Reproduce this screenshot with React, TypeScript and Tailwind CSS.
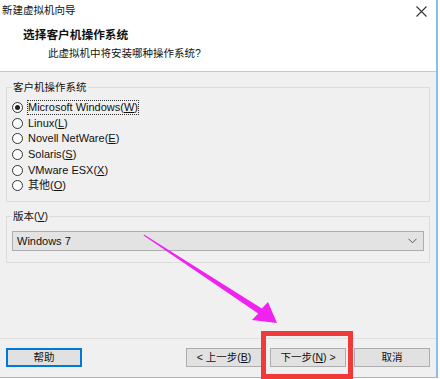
import { ReactNode } from "react";

const cjk = "font-['Liberation_Sans','Noto_Sans_CJK_SC',sans-serif]";

interface OsOption {
  label: string;
  key: string;
  checked?: boolean;
}

const osOptions: OsOption[] = [
  { label: "Microsoft Windows", key: "W", checked: true },
  { label: "Linux", key: "L" },
  { label: "Novell NetWare", key: "E" },
  { label: "Solaris", key: "S" },
  { label: "VMware ESX", key: "X" },
  { label: "其他", key: "O" },
];

const Hotkey = ({ k }: { k: string }) => (
  <>
    (<span className="underline underline-offset-[1px]">{k}</span>)
  </>
);

const Radio = ({ option }: { option: OsOption }) => (
  <div className="flex h-[15.6px] items-center">
    <div className="flex h-[11px] w-[11px] items-center justify-center rounded-full border border-[#333] bg-white">
      {option.checked && <div className="h-[5px] w-[5px] rounded-full bg-[#222]" />}
    </div>
    <span
      className={
        "ml-[4px] leading-[13px] " +
        (option.checked ? "border border-dotted border-[#333] px-[0px]" : "border border-transparent")
      }
    >
      {option.label}
      <Hotkey k={option.key} />
    </span>
  </div>
);

const Group = ({ title, className, children }: { title: ReactNode; className: string; children: ReactNode }) => (
  <div className={"ml-[6px] w-[424px] border border-[#dcdcdc] " + className}>
    <div className="-mt-[8px] ml-[5px] h-[14px] w-fit bg-[#f0f0f0] px-[1px] leading-[14px]">{title}</div>
    {children}
  </div>
);

const Button = ({ children, primary }: { children: ReactNode; primary?: boolean }) => (
  <button
    className={
      "flex h-[19px] w-[76px] items-center justify-center bg-[#e1e1e1] text-[10.5px] leading-none text-[#111] " +
      (primary
        ? "border border-[#0078d7] shadow-[inset_0_0_0_1px_#0078d7]"
        : "border border-[#adadad]")
    }
  >
    {children}
  </button>
);

export default function App() {
  return (
    <div className={"relative flex h-[379px] w-[440px] overflow-hidden bg-white text-[10.5px] text-[#111] " + cjk}>
      <div className="flex h-[378px] w-[438px] flex-col border-r-2 border-b border-[#8dbde6] bg-[#f0f0f0]">
        {/* header */}
        <div className="h-[72px] border-b border-[#c9c9c9] bg-white">
          <div className="flex items-center justify-between pl-[2px] pr-[9px] pt-[3px]">
            <span className="text-[10.5px] leading-[14px]">新建虚拟机向导</span>
            <svg width="11" height="11" viewBox="0 0 11 11" className="mt-[2px]">
              <path d="M0.5 0.5L10.5 10.5M10.5 0.5L0.5 10.5" stroke="#333" strokeWidth="1.1" />
            </svg>
          </div>
          <div className="ml-[23px] mt-[11px] text-[11.7px] font-bold leading-[14px]">选择客户机操作系统</div>
          <div className="ml-[48px] mt-[4px] leading-[14px]">此虚拟机中将安装哪种操作系统?</div>
        </div>

        {/* body */}
        <Group title="客户机操作系统" className="mt-[15px] h-[115px]">
          <div className="mt-[6px] pl-[5px] text-[11px]">
            {osOptions.map((o) => (
              <Radio key={o.key} option={o} />
            ))}
          </div>
        </Group>

        <Group
          title={
            <>
              版本<Hotkey k="V" />
            </>
          }
          className="mt-[14px] h-[47px]"
        >
          <div className="ml-[5px] mt-[8px] flex h-[20px] w-[412px] items-center justify-between border border-[#adadad] bg-[#e3e3e3] pl-[4px] pr-[6px] text-[11px]">
            <span>Windows 7</span>
            <svg width="9" height="6" viewBox="0 0 9 6">
              <path d="M0.5 0.8L4.5 4.8L8.5 0.8" fill="none" stroke="#555" strokeWidth="1" />
            </svg>
          </div>
        </Group>

        {/* footer */}
        <div className="mt-auto h-[39px] border-t border-[#dfdfdf] pt-[9px]">
          <div className="flex pl-[6px]">
            <Button primary>帮助</Button>
            <div className="ml-auto flex gap-[8px] pr-[6px]">
              <Button>
                &lt; 上一步<Hotkey k="B" />
              </Button>
              <Button>
                下一步<Hotkey k="N" /> &gt;
              </Button>
              <Button>取消</Button>
            </div>
          </div>
        </div>
      </div>

      {/* annotation overlays */}
      <svg className="pointer-events-none absolute left-0 top-0" width="440" height="379">
        <polygon
          points="144,234.4 261.8,308.4 268,302 277,323 252,320 258.2,313.6 143.6,235.6"
          fill="#f022f0"
        />
      </svg>
      <div className="pointer-events-none absolute left-[261px] top-[331px] h-[48px] w-[92px] border-[5px] border-[#f03a3a]" />
    </div>
  );
}
